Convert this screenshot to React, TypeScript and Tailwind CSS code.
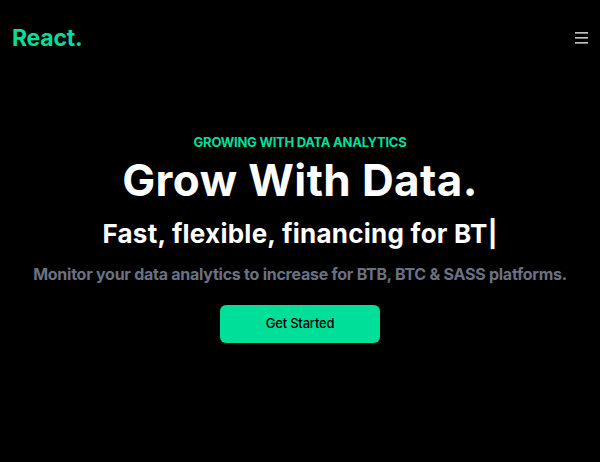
import React from "react";

export default function App() {
  return (
    <div className="min-h-[462px] w-full bg-black text-white" style={{ fontFamily: "Inter, 'Noto Sans', sans-serif" }}>
      <nav className="flex h-[75px] items-center justify-between px-3">
        <h1 className="text-[23px] font-bold leading-[30px] tracking-[-0.2px] text-[#00df9a]">React.</h1>
        <button className="text-white">
          <svg width="13" height="12" viewBox="0 0 13 12" fill="none" stroke="currentColor" strokeWidth="1.3">
            <path d="M0 0.9h13M0 5.9h13M0 10.9h13" />
          </svg>
        </button>
      </nav>
      <div className="flex flex-col items-center pt-[57px] text-center">
        <p className="text-[13px] font-bold leading-[20px] tracking-[-0.26px] text-[#00df9a]">GROWING WITH DATA ANALYTICS</p>
        <h2 className="mt-[4px] text-[44px] font-bold leading-[48px] tracking-[0.4px]">Grow With Data.</h2>
        <div className="mt-[14px] text-[26px] font-bold leading-[32px] tracking-[0.25px]">
          Fast, flexible, financing for BT|
        </div>
        <p className="mt-[12px] text-[16px] font-bold leading-[24px] tracking-[-0.25px] text-gray-500">
          Monitor your data analytics to increase for BTB, BTC &amp; SASS platforms.
        </p>
        <button className="mt-[19px] h-[38px] w-[160px] rounded-md bg-[#00df9a] text-[13px] font-medium tracking-[-0.2px] text-black">
          Get Started
        </button>
      </div>
    </div>
  );
}
